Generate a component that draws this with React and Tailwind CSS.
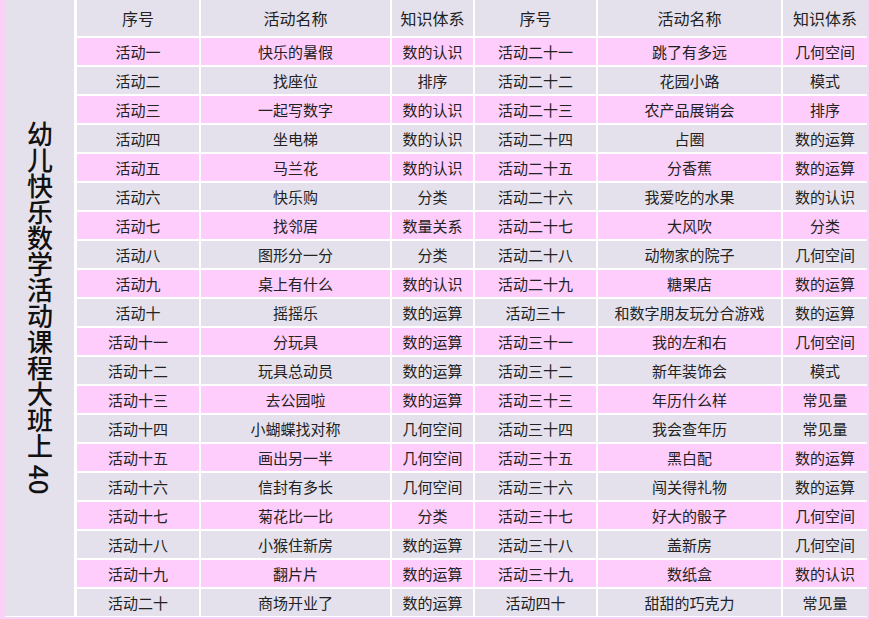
import React from "react";

const rows = [
  ["活动一", "快乐的暑假", "数的认识", "活动二十一", "跳了有多远", "几何空间"],
  ["活动二", "找座位", "排序", "活动二十二", "花园小路", "模式"],
  ["活动三", "一起写数字", "数的认识", "活动二十三", "农产品展销会", "排序"],
  ["活动四", "坐电梯", "数的认识", "活动二十四", "占圈", "数的运算"],
  ["活动五", "马兰花", "数的认识", "活动二十五", "分香蕉", "数的运算"],
  ["活动六", "快乐购", "分类", "活动二十六", "我爱吃的水果", "数的认识"],
  ["活动七", "找邻居", "数量关系", "活动二十七", "大风吹", "分类"],
  ["活动八", "图形分一分", "分类", "活动二十八", "动物家的院子", "几何空间"],
  ["活动九", "桌上有什么", "数的认识", "活动二十九", "糖果店", "数的运算"],
  ["活动十", "摇摇乐", "数的运算", "活动三十", "和数字朋友玩分合游戏", "数的运算"],
  ["活动十一", "分玩具", "数的运算", "活动三十一", "我的左和右", "几何空间"],
  ["活动十二", "玩具总动员", "数的运算", "活动三十二", "新年装饰会", "模式"],
  ["活动十三", "去公园啦", "数的运算", "活动三十三", "年历什么样", "常见量"],
  ["活动十四", "小蝴蝶找对称", "几何空间", "活动三十四", "我会查年历", "常见量"],
  ["活动十五", "画出另一半", "几何空间", "活动三十五", "黑白配", "数的运算"],
  ["活动十六", "信封有多长", "几何空间", "活动三十六", "闯关得礼物", "数的运算"],
  ["活动十七", "菊花比一比", "分类", "活动三十七", "好大的骰子", "几何空间"],
  ["活动十八", "小猴住新房", "数的运算", "活动三十八", "盖新房", "几何空间"],
  ["活动十九", "翻片片", "数的运算", "活动三十九", "数纸盒", "数的认识"],
  ["活动二十", "商场开业了", "数的运算", "活动四十", "甜甜的巧克力", "常见量"],
];

const header = ["序号", "活动名称", "知识体系", "序号", "活动名称", "知识体系"];

export default function App() {
  return (
    <div
      className="w-[869px] h-[619px] bg-[#f9d2f5] pl-[5px] pr-[2px] pb-[2px] overflow-hidden"
      style={{ fontFamily: '"Noto Sans CJK SC", "Noto Sans", sans-serif' }}
    >
      <div className="flex gap-[3px] bg-white pb-[1px] h-[617px]">
        <div className="w-[69px] bg-[#e4e1ec] flex items-center justify-center">
          <div className="[writing-mode:vertical-rl] text-[26px] leading-[28px] font-medium text-[#111] tracking-[0px]">
            幼儿快乐数学活动课程大班上 40
          </div>
        </div>
        <div className="grid grid-cols-[122px_189px_81px_121px_183px_84px] grid-rows-[36px_repeat(20,27px)] gap-[2px] bg-white content-start">
          {header.map((h, i) => (
            <div
              key={"h" + i}
              className="bg-[#e4e1ec] flex items-center justify-center text-[16px] text-[#222]"
            >
              {h}
            </div>
          ))}
          {rows.map((r, ri) =>
            r.map((c, ci) => (
              <div
                key={ri + "-" + ci}
                className={
                  (ri % 2 === 0 ? "bg-[#fecdfc]" : "bg-[#e4e1ec]") +
                  " flex items-center justify-center text-[15px] text-[#222] leading-none"
                }
              >
                {c}
              </div>
            ))
          )}
        </div>
      </div>
    </div>
  );
}
